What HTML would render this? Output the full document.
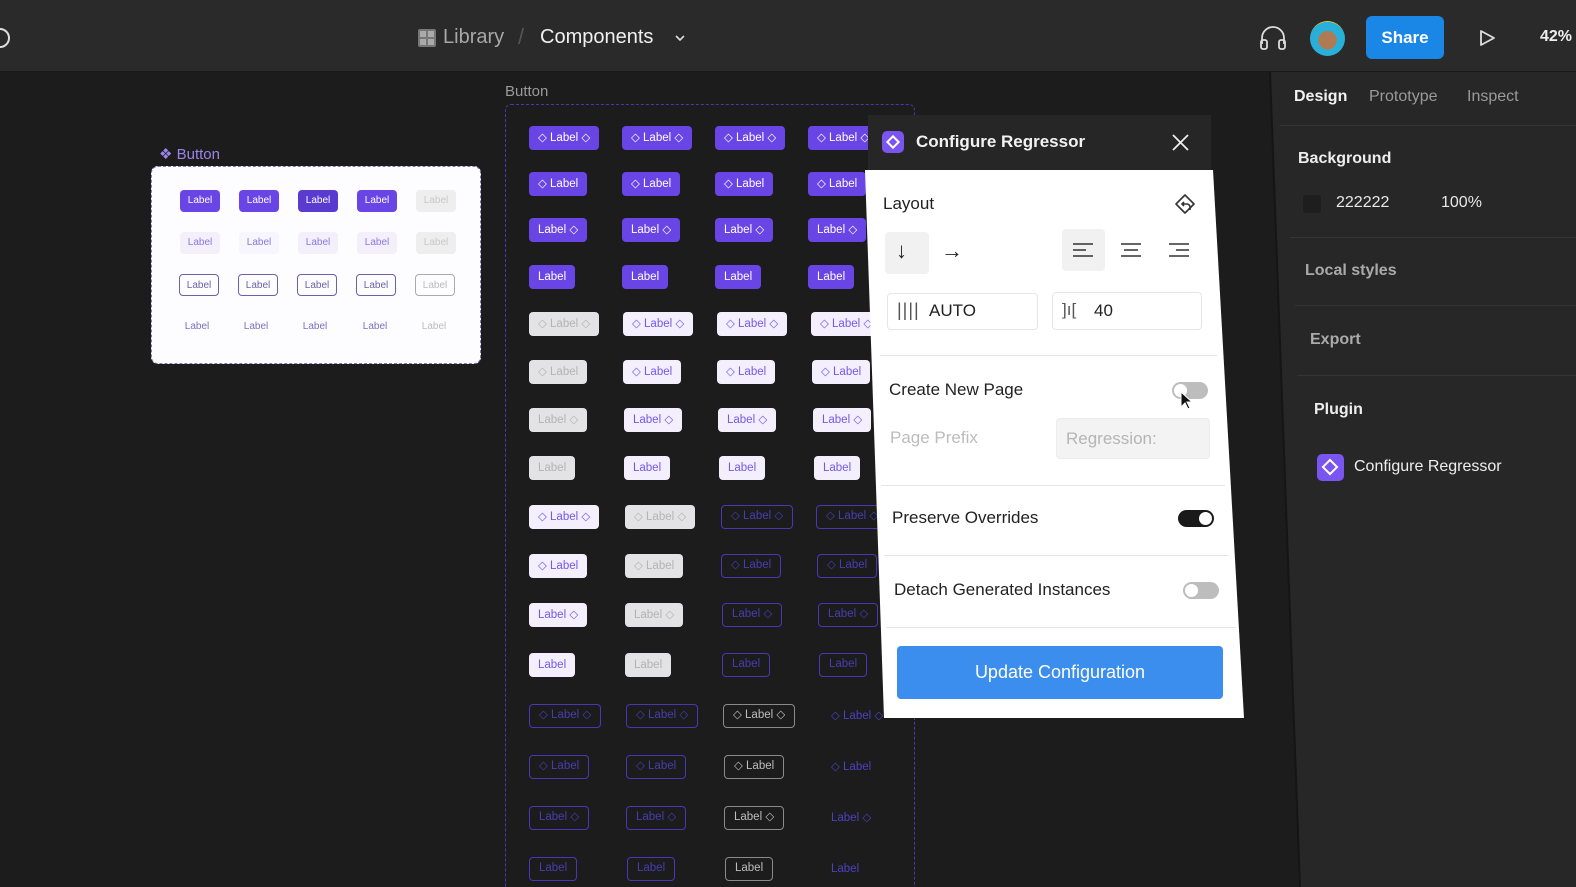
<!DOCTYPE html>
<html><head><meta charset="utf-8">
<style>
*{margin:0;padding:0;box-sizing:border-box}
html,body{width:1576px;height:887px;overflow:hidden}
body{background:#1c1c1d;font-family:"Liberation Sans",sans-serif;position:relative}
.a{position:absolute}
.top{left:0;top:0;width:1576px;height:72px;background:#2a2a2a;border-bottom:1px solid #1a1a1a}
.b{position:absolute;height:24px;border-radius:4px;font-size:11.5px;line-height:24px;padding:0 9px;white-space:nowrap}
.p{background:#6a45e6;color:#fff}
.g{background:#e3e3e5;color:#b3b3b6}
.w{background:#f3effd;color:#7658e6}
.o{border:1.5px solid #4a37b5;color:#4a3cb0;line-height:21px}
.og{border:1.5px solid #8a8a8a;color:#bdbdbd;line-height:21px}
.t{color:#4f40bf}
.lb{position:absolute;height:22px;width:40px;border-radius:4px;font-size:10px;line-height:22px;text-align:center}
.rp{left:1270px;top:72px;width:306px;height:815px;background:#272727;clip-path:polygon(0 0,100% 0,100% 100%,30px 100%)}
.hr{position:absolute;height:1px;background:#353535}
.dl{position:absolute;height:1px;background:#e6e6e6}
.tg{position:absolute;width:36px;height:17px;border-radius:9px}
.tg i{position:absolute;top:2px;width:13px;height:13px;border-radius:50%;background:#fff}
</style></head><body>

<div class="a top"></div>
<div class="a" style="left:-10px;top:28px;width:20px;height:20px;border:2px solid #ddd;border-radius:50%"></div>
<svg class="a" style="left:417px;top:28px" width="20" height="20" viewBox="0 0 20 20"><rect x="1" y="1" width="18" height="18" rx="2" fill="#777"/><rect x="3" y="3" width="6" height="6" fill="#aaa"/><rect x="11" y="3" width="6" height="6" fill="#aaa"/><rect x="3" y="11" width="6" height="6" fill="#aaa"/><rect x="11" y="11" width="6" height="6" fill="#aaa"/></svg>
<div class="a" style="left:443px;top:26px;font-size:20px;color:#a8a8a8">Library</div>
<div class="a" style="left:518px;top:24px;font-size:22px;color:#555">/</div>
<div class="a" style="left:540px;top:26px;font-size:20px;color:#f0f0f0">Components</div>
<svg class="a" style="left:674px;top:33px" width="12" height="10" viewBox="0 0 12 10"><path d="M2 3l4 4 4-4" stroke="#ddd" stroke-width="1.6" fill="none"/></svg>
<svg class="a" style="left:1258px;top:24px" width="30" height="28" viewBox="0 0 30 28"><path d="M4 20V14a11 11 0 0 1 22 0v6" stroke="#ddd" stroke-width="1.8" fill="none"/><rect x="3" y="16" width="6" height="9" rx="2" stroke="#ddd" stroke-width="1.8" fill="none"/><rect x="21" y="16" width="6" height="9" rx="2" stroke="#ddd" stroke-width="1.8" fill="none"/></svg>
<div class="a" style="left:1310px;top:21px;width:35px;height:35px;border-radius:50%;background:radial-gradient(circle at 50% 55%,#b07a55 0 35%,#2ab0d8 36% 70%,#e8d430 71%)"></div>
<div class="a" style="left:1366px;top:16px;width:78px;height:43px;border-radius:6px;background:#1a86e6;color:#fff;font-size:17px;font-weight:bold;text-align:center;line-height:43px">Share</div>
<svg class="a" style="left:1477px;top:28px" width="20" height="20" viewBox="0 0 20 20"><path d="M4 3l13 7-13 7z" stroke="#ddd" stroke-width="1.8" fill="none" stroke-linejoin="round"/></svg>
<div class="a" style="left:1540px;top:28px;font-size:16px;color:#eee;font-weight:bold">42%</div>

<!-- right panel -->
<div class="a" style="left:1269px;top:72px;width:307px;height:815px;background:#151515;clip-path:polygon(0 0,100% 0,100% 100%,30px 100%)"></div>
<div class="a rp" style="left:1271px"></div>
<div class="a" style="left:1294px;top:88px;font-size:16px;color:#f2f2f2;font-weight:bold">Design</div>
<div class="a" style="left:1369px;top:88px;font-size:16px;color:#9a9a9a">Prototype</div>
<div class="a" style="left:1467px;top:88px;font-size:16px;color:#9a9a9a">Inspect</div>
<div class="hr" style="left:1280px;top:125px;width:296px"></div>
<div class="a" style="left:1298px;top:150px;font-size:16px;color:#eee;font-weight:bold">Background</div>
<div class="a" style="left:1303px;top:195px;width:18px;height:18px;background:#1e1e1e;border-radius:2px"></div>
<div class="a" style="left:1336px;top:194px;font-size:16px;color:#e8e8e8">222222</div>
<div class="a" style="left:1441px;top:194px;font-size:16px;color:#e8e8e8">100%</div>
<div class="hr" style="left:1290px;top:237px;width:286px"></div>
<div class="a" style="left:1305px;top:262px;font-size:16px;color:#aaa;font-weight:bold">Local styles</div>
<div class="hr" style="left:1295px;top:305px;width:281px"></div>
<div class="a" style="left:1310px;top:331px;font-size:16px;color:#aaa;font-weight:bold">Export</div>
<div class="hr" style="left:1297px;top:375px;width:279px"></div>
<div class="a" style="left:1314px;top:401px;font-size:16px;color:#eee;font-weight:bold">Plugin</div>
<div class="a" style="left:1317px;top:454px;width:27px;height:27px;border-radius:5px;background:#7a55ef"></div>
<div class="a" style="left:1324px;top:461px;width:12px;height:12px;border:2.5px solid #fff;transform:rotate(45deg)"></div>
<div class="a" style="left:1354px;top:458px;font-size:16px;color:#eee">Configure Regressor</div>

<!-- left frame -->
<div class="a" style="left:159px;top:145px;font-size:15px;color:#9a86e8">❖ Button</div>
<div class="a" style="left:151px;top:166px;width:330px;height:198px;background:#fdfdff;border:1.5px dashed #8477b8;border-radius:7px"></div>
<div class="lb p" style="left:180px;top:190px">Label</div><div class="lb p" style="left:239px;top:190px">Label</div><div class="lb p" style="left:298px;top:190px;background:#5a3bd0">Label</div><div class="lb p" style="left:357px;top:190px">Label</div><div class="lb" style="left:416px;top:190px;background:#eee;color:#c8c8c8">Label</div>
<div class="lb" style="left:180px;top:232px;background:#f3f0fc;color:#8a78e0">Label</div><div class="lb" style="left:239px;top:232px;background:#f7f5fd;color:#8a78e0">Label</div><div class="lb" style="left:298px;top:232px;background:#f3f0fc;color:#8a78e0">Label</div><div class="lb" style="left:357px;top:232px;background:#f3f0fc;color:#8a78e0">Label</div><div class="lb" style="left:416px;top:232px;background:#eee;color:#c8c8c8">Label</div>
<div class="lb" style="left:179px;top:274px;border:1.5px solid #6a62a8;color:#6a62a8">Label</div><div class="lb" style="left:238px;top:274px;border:1.5px solid #6a62a8;color:#6a62a8">Label</div><div class="lb" style="left:297px;top:274px;border:1.5px solid #6a62a8;color:#6a62a8">Label</div><div class="lb" style="left:356px;top:274px;border:1.5px solid #6a62a8;color:#6a62a8">Label</div><div class="lb" style="left:415px;top:274px;border:1.5px solid #aaa;color:#bbb">Label</div>
<div class="lb" style="left:177px;top:316px;color:#7c70c0">Label</div><div class="lb" style="left:236px;top:316px;color:#7c70c0">Label</div><div class="lb" style="left:295px;top:316px;color:#7c70c0">Label</div><div class="lb" style="left:355px;top:316px;color:#7c70c0">Label</div><div class="lb" style="left:414px;top:316px;color:#bbb">Label</div>

<!-- grid frame -->
<div class="a" style="left:505px;top:83px;font-size:15px;color:#9a9a9a">Button</div>
<div class="a" style="left:505px;top:104px;width:410px;height:800px;border:1.5px dashed #4a3aa8;border-radius:6px"></div>

<!-- group A -->
<div class="b p" style="left:529px;top:126px">◇ Label ◇</div><div class="b p" style="left:622px;top:126px">◇ Label ◇</div><div class="b p" style="left:715px;top:126px">◇ Label ◇</div><div class="b p" style="left:808px;top:126px">◇ Label ◇</div>
<div class="b p" style="left:529px;top:172px">◇ Label</div><div class="b p" style="left:622px;top:172px">◇ Label</div><div class="b p" style="left:715px;top:172px">◇ Label</div><div class="b p" style="left:808px;top:172px">◇ Label</div>
<div class="b p" style="left:529px;top:218px">Label ◇</div><div class="b p" style="left:622px;top:218px">Label ◇</div><div class="b p" style="left:715px;top:218px">Label ◇</div><div class="b p" style="left:808px;top:218px">Label ◇</div>
<div class="b p" style="left:529px;top:265px">Label</div><div class="b p" style="left:622px;top:265px">Label</div><div class="b p" style="left:715px;top:265px">Label</div><div class="b p" style="left:808px;top:265px">Label</div>
<!-- group B -->
<div class="b g" style="left:529px;top:312px">◇ Label ◇</div><div class="b w" style="left:623px;top:312px">◇ Label ◇</div><div class="b w" style="left:717px;top:312px">◇ Label ◇</div><div class="b w" style="left:811px;top:312px">◇ Label ◇</div>
<div class="b g" style="left:529px;top:360px">◇ Label</div><div class="b w" style="left:623px;top:360px">◇ Label</div><div class="b w" style="left:717px;top:360px">◇ Label</div><div class="b w" style="left:812px;top:360px">◇ Label</div>
<div class="b g" style="left:529px;top:408px">Label ◇</div><div class="b w" style="left:624px;top:408px">Label ◇</div><div class="b w" style="left:718px;top:408px">Label ◇</div><div class="b w" style="left:813px;top:408px">Label ◇</div>
<div class="b g" style="left:529px;top:456px">Label</div><div class="b w" style="left:624px;top:456px">Label</div><div class="b w" style="left:719px;top:456px">Label</div><div class="b w" style="left:814px;top:456px">Label</div>
<!-- group C -->
<div class="b w" style="left:529px;top:505px">◇ Label ◇</div><div class="b g" style="left:625px;top:505px">◇ Label ◇</div><div class="b o" style="left:721px;top:505px">◇ Label ◇</div><div class="b o" style="left:816px;top:505px">◇ Label ◇</div>
<div class="b w" style="left:529px;top:554px">◇ Label</div><div class="b g" style="left:625px;top:554px">◇ Label</div><div class="b o" style="left:721px;top:554px">◇ Label</div><div class="b o" style="left:817px;top:554px">◇ Label</div>
<div class="b w" style="left:529px;top:603px">Label ◇</div><div class="b g" style="left:625px;top:603px">Label ◇</div><div class="b o" style="left:722px;top:603px">Label ◇</div><div class="b o" style="left:818px;top:603px">Label ◇</div>
<div class="b w" style="left:529px;top:653px">Label</div><div class="b g" style="left:625px;top:653px">Label</div><div class="b o" style="left:722px;top:653px">Label</div><div class="b o" style="left:819px;top:653px">Label</div>
<!-- group D -->
<div class="b o" style="left:529px;top:704px">◇ Label ◇</div><div class="b o" style="left:626px;top:704px">◇ Label ◇</div><div class="b og" style="left:723px;top:704px">◇ Label ◇</div><div class="b t" style="left:822px;top:704px">◇ Label ◇</div>
<div class="b o" style="left:529px;top:755px">◇ Label</div><div class="b o" style="left:626px;top:755px">◇ Label</div><div class="b og" style="left:724px;top:755px">◇ Label</div><div class="b t" style="left:822px;top:755px">◇ Label</div>
<div class="b o" style="left:529px;top:806px">Label ◇</div><div class="b o" style="left:626px;top:806px">Label ◇</div><div class="b og" style="left:724px;top:806px">Label ◇</div><div class="b t" style="left:822px;top:806px">Label ◇</div>
<div class="b o" style="left:529px;top:857px">Label</div><div class="b o" style="left:627px;top:857px">Label</div><div class="b og" style="left:725px;top:857px">Label</div><div class="b t" style="left:822px;top:857px">Label</div>

<!-- dialog -->
<div class="a" style="left:868px;top:115px;width:343px;height:58px;background:#262626"></div>
<div class="a" style="left:0;top:0;width:1576px;height:887px;background:#fff;clip-path:polygon(865px 170px,1213px 170px,1244px 718px,884px 718px)"></div>
<div class="a" style="left:882px;top:131px;width:22px;height:22px;border-radius:5px;background:#7a55ef"></div>
<div class="a" style="left:888px;top:137px;width:10px;height:10px;border:2.5px solid #fff;transform:rotate(45deg)"></div>
<div class="a" style="left:916px;top:132px;font-size:17px;color:#f2f2f2;font-weight:bold">Configure Regressor</div>
<svg class="a" style="left:1171px;top:133px" width="19" height="19" viewBox="0 0 19 19"><path d="M2 2l15 15M17 2L2 17" stroke="#eee" stroke-width="1.8"/></svg>

<div class="a" style="left:883px;top:194px;font-size:17px;color:#222">Layout</div>
<svg class="a" style="left:1173px;top:193px" width="24" height="24" viewBox="0 0 24 24"><path d="M12 2l9 9-9 9-9-9z" stroke="#333" stroke-width="1.6" fill="none" stroke-linejoin="round"/><path d="M9 11h5a3 3 0 0 1 3 3v3M11 9l-2 2 2 2" stroke="#333" stroke-width="1.6" fill="none"/></svg>
<div class="a" style="left:885px;top:232px;width:44px;height:42px;background:#f1f1f1;border-radius:4px"></div>
<div class="a" style="left:896px;top:238px;font-size:22px;color:#222">↓</div>
<div class="a" style="left:941px;top:238px;font-size:22px;color:#222">→</div>
<div class="a" style="left:1062px;top:229px;width:43px;height:42px;background:#f1f1f1;border-radius:4px"></div>
<svg class="a" style="left:1072px;top:242px" width="140" height="18" viewBox="0 0 140 18"><path d="M1 2h20M1 8h13M1 14h20" stroke="#333" stroke-width="1.6"/><path d="M49 2h20M52 8h14M49 14h20" stroke="#333" stroke-width="1.6"/><path d="M97 2h20M104 8h13M97 14h20" stroke="#333" stroke-width="1.6"/></svg>
<div class="a" style="left:887px;top:293px;width:151px;height:37px;border:1px solid #e6e6e6;border-radius:4px"></div>
<div class="a" style="left:897px;top:300px;font-size:18px;color:#555;letter-spacing:1px">||||</div>
<div class="a" style="left:929px;top:301px;font-size:17px;color:#222">AUTO</div>
<div class="a" style="left:1052px;top:292px;width:150px;height:38px;border:1px solid #e6e6e6;border-radius:4px"></div>
<div class="a" style="left:1062px;top:300px;font-size:17px;color:#555">]ı[</div>
<div class="a" style="left:1094px;top:301px;font-size:17px;color:#222">40</div>
<div class="dl" style="left:880px;top:355px;width:337px"></div>
<div class="a" style="left:889px;top:380px;font-size:17px;color:#222">Create New Page</div>
<div class="tg" style="left:1172px;top:382px;background:#bdbdbd"><i style="left:2px"></i></div>
<svg class="a" style="left:1180px;top:391px" width="14" height="20" viewBox="0 0 14 20"><path d="M1 1v15l4-4 3 6 2-1-3-6h5z" fill="#111" stroke="#fff" stroke-width="1"/></svg>
<div class="a" style="left:890px;top:428px;font-size:17px;color:#bcbcbc">Page Prefix</div>
<div class="a" style="left:1056px;top:418px;width:154px;height:41px;background:#f3f3f3;border:1px solid #ececec;border-radius:4px"></div>
<div class="a" style="left:1066px;top:429px;font-size:17px;color:#b5b5b5">Regression:</div>
<div class="dl" style="left:881px;top:485px;width:344px"></div>
<div class="a" style="left:892px;top:508px;font-size:17px;color:#222">Preserve Overrides</div>
<div class="tg" style="left:1178px;top:510px;background:#1a1a1a"><i style="left:21px"></i></div>
<div class="dl" style="left:884px;top:555px;width:345px"></div>
<div class="a" style="left:894px;top:580px;font-size:17px;color:#222">Detach Generated Instances</div>
<div class="tg" style="left:1183px;top:582px;background:#bdbdbd"><i style="left:2px"></i></div>
<div class="dl" style="left:886px;top:627px;width:350px"></div>
<div class="a" style="left:897px;top:646px;width:326px;height:53px;background:#3b8eed;border-radius:4px;color:#fff;font-size:18px;text-align:center;line-height:53px">Update Configuration</div>
</body></html>
